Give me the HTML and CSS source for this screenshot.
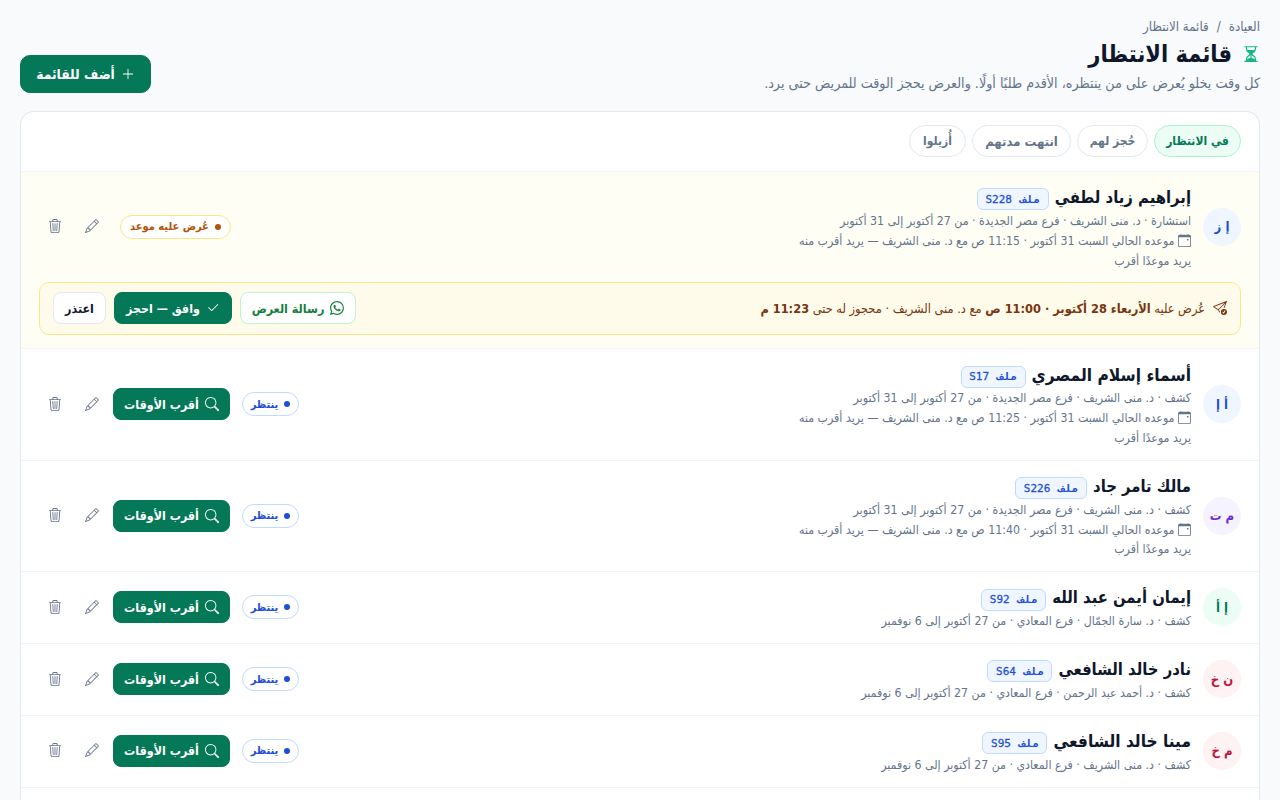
FILE: index.html
```html
<!doctype html>
<html lang="ar" dir="rtl">
<head>
    <meta charset="utf-8">
    <title>قائمة الانتظار</title>
    <link rel="stylesheet" href="styles.css">
</head>
<body>
<svg class="sprite" aria-hidden="true">
    <symbol id="i-hourglass" viewBox="0 0 16 16"><path d="M2.500 15a.5.5 0 1 1 0-1h1v-1a4.500 4.500 0 0 1 2.557-4.060c.290-.139.443-.377.443-.590v-.700c0-.213-.154-.451-.443-.590A4.500 4.500 0 0 1 3.500 3V2h-1a.5.5 0 0 1 0-1h11a.5.5 0 0 1 0 1h-1v1a4.500 4.500 0 0 1-2.557 4.060c-.290.139-.443.377-.443.590v.700c0 .213.154.451.443.590A4.500 4.500 0 0 1 12.500 13v1h1a.5.5 0 0 1 0 1zm2-13v1c0 .537.120 1.045.337 1.500h6.326c.216-.455.337-.963.337-1.500V2zm3 6.350c0 .701-.478 1.236-1.011 1.492A3.500 3.500 0 0 0 4.500 13s.866-1.299 3-1.480zm1 0v3.170c2.134.181 3 1.480 3 1.480a3.500 3.500 0 0 0-1.989-3.158C8.978 9.586 8.500 9.052 8.500 8.351z"/></symbol>
    <symbol id="i-plus" viewBox="0 0 16 16"><path d="M8 2a.5.5 0 0 1 .5.5v5h5a.5.5 0 0 1 0 1h-5v5a.5.5 0 0 1-1 0v-5h-5a.5.5 0 0 1 0-1h5v-5A.5.5 0 0 1 8 2"/></symbol>
    <symbol id="i-calendar" viewBox="0 0 16 16"><path d="M11 6.5a.5.5 0 0 1 .5-.5h1a.5.5 0 0 1 .5.5v1a.5.5 0 0 1-.5.5h-1a.5.5 0 0 1-.5-.5z"/><path d="M3.500 0a.5.5 0 0 1 .5.5V1h8V.5a.5.5 0 0 1 1 0V1h1a2 2 0 0 1 2 2v11a2 2 0 0 1-2 2H2a2 2 0 0 1-2-2V3a2 2 0 0 1 2-2h1V.5a.5.5 0 0 1 .5-.5M1 4v10a1 1 0 0 0 1 1h12a1 1 0 0 0 1-1V4z"/></symbol>
    <symbol id="i-send" viewBox="0 0 16 16"><path d="M15.964.686a.5.5 0 0 0-.65-.65L.767 5.855a.75.75 0 0 0-.124 1.329l4.995 3.178 1.531 2.406a.5.5 0 0 0 .844-.536L6.637 10.070l7.494-7.494-1.895 4.738a.5.5 0 1 0 .928.372zm-2.540 1.183L5.930 9.363 1.591 6.602z"/><path d="M16 12.500a3.500 3.500 0 1 1-7 0 3.500 3.500 0 0 1 7 0m-1.993-1.679a.5.5 0 0 0-.686.172l-1.170 1.950-.547-.547a.5.5 0 0 0-.708.708l.774.773a.75.75 0 0 0 1.174-.144l1.335-2.226a.5.5 0 0 0-.172-.686"/></symbol>
    <symbol id="i-whatsapp" viewBox="0 0 16 16"><path d="M13.601 2.326A7.850 7.850 0 0 0 7.994 0C3.627 0 .068 3.558.064 7.926c0 1.399.366 2.760 1.057 3.965L0 16l4.204-1.102a7.900 7.900 0 0 0 3.790.965h.004c4.368 0 7.926-3.558 7.930-7.930A7.900 7.900 0 0 0 13.600 2.326zM7.994 14.521a6.600 6.600 0 0 1-3.356-.920l-.240-.144-2.494.654.666-2.433-.156-.251a6.560 6.560 0 0 1-1.007-3.505c0-3.626 2.957-6.584 6.591-6.584a6.560 6.560 0 0 1 4.660 1.931 6.560 6.560 0 0 1 1.928 4.660c-.004 3.639-2.961 6.592-6.592 6.592m3.615-4.934c-.197-.099-1.170-.578-1.353-.646-.182-.065-.315-.099-.445.099-.133.197-.513.646-.627.775-.114.133-.232.148-.430.050-.197-.100-.836-.308-1.592-.985-.590-.525-.985-1.175-1.103-1.372-.114-.198-.011-.304.088-.403.087-.088.197-.232.296-.346.100-.114.133-.198.198-.330.065-.134.034-.248-.015-.347-.050-.099-.445-1.076-.612-1.470-.160-.389-.323-.335-.445-.340-.114-.007-.247-.007-.380-.007a.730.730 0 0 0-.529.247c-.182.198-.691.677-.691 1.654s.710 1.916.810 2.049c.098.133 1.394 2.132 3.383 2.992.470.205.840.326 1.129.418.475.152.904.129 1.246.080.380-.058 1.171-.480 1.338-.943.164-.464.164-.860.114-.943-.049-.084-.182-.133-.380-.232"/></symbol>
    <symbol id="i-check" viewBox="0 0 16 16"><path d="M13.854 3.646a.5.5 0 0 1 0 .708l-7 7a.5.5 0 0 1-.708 0l-3.500-3.500a.5.5 0 1 1 .708-.708L6.500 10.293l6.646-6.647a.5.5 0 0 1 .708 0"/></symbol>
    <symbol id="i-search" viewBox="0 0 16 16"><path d="M11.742 10.344a6.500 6.500 0 1 0-1.397 1.398h-.001q.044.060.098.115l3.850 3.850a1 1 0 0 0 1.415-1.414l-3.850-3.850a1 1 0 0 0-.115-.100zM12 6.500a5.500 5.500 0 1 1-11 0 5.500 5.500 0 0 1 11 0"/></symbol>
    <symbol id="i-pencil" viewBox="0 0 16 16"><path d="M12.146.146a.5.5 0 0 1 .708 0l3 3a.5.5 0 0 1 0 .708l-10 10a.5.5 0 0 1-.168.110l-5 2a.5.5 0 0 1-.650-.650l2-5a.5.5 0 0 1 .110-.168zM11.207 2.500 13.500 4.793 14.793 3.500 12.500 1.207zm1.586 3L10.500 3.207 4 9.707V10h.500a.5.5 0 0 1 .5.5v.5h.5a.5.5 0 0 1 .5.5v.5h.293zm-9.761 5.175-.106.106-1.528 3.821 3.821-1.528.106-.106A.5.5 0 0 1 5 12.500V12h-.5a.5.5 0 0 1-.5-.5V11h-.5a.5.5 0 0 1-.468-.325"/></symbol>
    <symbol id="i-trash" viewBox="0 0 16 16"><path d="M6.500 1h3a.5.5 0 0 1 .5.5v1H6v-1a.5.5 0 0 1 .5-.5M11 2.500v-1A1.500 1.500 0 0 0 9.500 0h-3A1.500 1.500 0 0 0 5 1.500v1H1.500a.5.5 0 0 0 0 1h.538l.853 10.660A2 2 0 0 0 4.885 16h6.230a2 2 0 0 0 1.994-1.840l.853-10.660h.538a.5.5 0 0 0 0-1zm1.958 1-.846 10.580a1 1 0 0 1-.997.920h-6.230a1 1 0 0 1-.997-.920L3.042 3.500zm-7.487 1a.5.5 0 0 1 .528.470l.5 8.500a.5.5 0 0 1-.998.060L5 5.030a.5.5 0 0 1 .470-.530zm5.058 0a.5.5 0 0 1 .470.530l-.5 8.500a.5.5 0 1 1-.998-.060l.5-8.500a.5.5 0 0 1 .528-.470M8 4.500a.5.5 0 0 1 .5.5v8.500a.5.5 0 0 1-1 0V5a.5.5 0 0 1 .5-.5"/></symbol>
</svg>

<nav class="crumbs"><span>العيادة</span><span>/</span><span>قائمة الانتظار</span></nav>
<header class="page-head">
    <div>
        <h1><svg class="icon"><use href="#i-hourglass"/></svg><span>قائمة الانتظار</span></h1>
        <p class="sub">كل وقت يخلو يُعرض على من ينتظره، الأقدم طلبًا أولًا. والعرض يحجز الوقت للمريض حتى يرد.</p>
    </div>
    <button class="btn primary add"><svg class="icon"><use href="#i-plus"/></svg><span>أضف للقائمة</span></button>
</header>

<main class="card">
    <div class="tabs">
        <a class="tab t1 active">في الانتظار</a>
        <a class="tab t2">حُجز لهم</a>
        <a class="tab t3">انتهت مدتهم</a>
        <a class="tab t4">أُزيلوا</a>
    </div>

    <section class="item offered">
        <div class="row">
            <div class="avatar blue">إ ز</div>
            <div class="info">
                <div class="name"><b>إبراهيم زياد لطفي</b><span class="file wide">ملف <i>S228</i></span></div>
                <div class="meta">استشارة · د. منى الشريف · فرع مصر الجديدة · من 27 أكتوبر إلى 31 أكتوبر</div>
                <div class="meta"><svg class="icon"><use href="#i-calendar"/></svg> موعده الحالي السبت 31 أكتوبر · 11:15 ص مع د. منى الشريف — يريد أقرب منه</div>
                <div class="meta">يريد موعدًا أقرب</div>
            </div>
            <span class="pill amber">عُرض عليه موعد</span>
            <div class="actions">
                <button class="tool"><svg class="icon"><use href="#i-pencil"/></svg></button>
                <button class="tool"><svg class="icon"><use href="#i-trash"/></svg></button>
            </div>
        </div>
        <div class="offer">
            <svg class="icon"><use href="#i-send"/></svg>
            <div class="offer-text">عُرض عليه <b>الأربعاء 28 أكتوبر · 11:00 ص</b> مع د. منى الشريف · محجوز له حتى <b>11:23 م</b></div>
            <button class="btn message"><svg class="icon"><use href="#i-whatsapp"/></svg><span>رسالة العرض</span></button>
            <button class="btn primary accept"><svg class="icon"><use href="#i-check"/></svg><span>وافق — احجز</span></button>
            <button class="btn decline"><span>اعتذر</span></button>
        </div>
    </section>

    <section class="item">
        <div class="row">
            <div class="avatar blue">أ إ</div>
            <div class="info">
                <div class="name large"><b>أسماء إسلام المصري</b><span class="file">ملف <i>S17</i></span></div>
                <div class="meta">كشف · د. منى الشريف · فرع مصر الجديدة · من 27 أكتوبر إلى 31 أكتوبر</div>
                <div class="meta"><svg class="icon"><use href="#i-calendar"/></svg> موعده الحالي السبت 31 أكتوبر · 11:25 ص مع د. منى الشريف — يريد أقرب منه</div>
                <div class="meta">يريد موعدًا أقرب</div>
            </div>
            <span class="pill">ينتظر</span>
            <div class="actions">
                <button class="btn primary find"><svg class="icon"><use href="#i-search"/></svg><span>أقرب الأوقات</span></button>
                <button class="tool"><svg class="icon"><use href="#i-pencil"/></svg></button>
                <button class="tool"><svg class="icon"><use href="#i-trash"/></svg></button>
            </div>
        </div>
    </section>

    <section class="item">
        <div class="row">
            <div class="avatar violet">م ت</div>
            <div class="info">
                <div class="name"><b>مالك تامر جاد</b><span class="file wide">ملف <i>S226</i></span></div>
                <div class="meta">كشف · د. منى الشريف · فرع مصر الجديدة · من 27 أكتوبر إلى 31 أكتوبر</div>
                <div class="meta"><svg class="icon"><use href="#i-calendar"/></svg> موعده الحالي السبت 31 أكتوبر · 11:40 ص مع د. منى الشريف — يريد أقرب منه</div>
                <div class="meta">يريد موعدًا أقرب</div>
            </div>
            <span class="pill">ينتظر</span>
            <div class="actions">
                <button class="btn primary find"><svg class="icon"><use href="#i-search"/></svg><span>أقرب الأوقات</span></button>
                <button class="tool"><svg class="icon"><use href="#i-pencil"/></svg></button>
                <button class="tool"><svg class="icon"><use href="#i-trash"/></svg></button>
            </div>
        </div>
    </section>

    <section class="item">
        <div class="row">
            <div class="avatar green">إ أ</div>
            <div class="info">
                <div class="name"><b>إيمان أيمن عبد الله</b><span class="file">ملف <i>S92</i></span></div>
                <div class="meta">كشف · د. سارة الجمّال · فرع المعادي · من 27 أكتوبر إلى 6 نوفمبر</div>
            </div>
            <span class="pill">ينتظر</span>
            <div class="actions">
                <button class="btn primary find"><svg class="icon"><use href="#i-search"/></svg><span>أقرب الأوقات</span></button>
                <button class="tool"><svg class="icon"><use href="#i-pencil"/></svg></button>
                <button class="tool"><svg class="icon"><use href="#i-trash"/></svg></button>
            </div>
        </div>
    </section>

    <section class="item">
        <div class="row">
            <div class="avatar red">ن خ</div>
            <div class="info">
                <div class="name"><b>نادر خالد الشافعي</b><span class="file">ملف <i>S64</i></span></div>
                <div class="meta">كشف · د. أحمد عبد الرحمن · فرع المعادي · من 27 أكتوبر إلى 6 نوفمبر</div>
            </div>
            <span class="pill">ينتظر</span>
            <div class="actions">
                <button class="btn primary find"><svg class="icon"><use href="#i-search"/></svg><span>أقرب الأوقات</span></button>
                <button class="tool"><svg class="icon"><use href="#i-pencil"/></svg></button>
                <button class="tool"><svg class="icon"><use href="#i-trash"/></svg></button>
            </div>
        </div>
    </section>

    <section class="item">
        <div class="row">
            <div class="avatar red">م خ</div>
            <div class="info">
                <div class="name large"><b>مينا خالد الشافعي</b><span class="file">ملف <i>S95</i></span></div>
                <div class="meta">كشف · د. منى الشريف · فرع المعادي · من 27 أكتوبر إلى 6 نوفمبر</div>
            </div>
            <span class="pill">ينتظر</span>
            <div class="actions">
                <button class="btn primary find"><svg class="icon"><use href="#i-search"/></svg><span>أقرب الأوقات</span></button>
                <button class="tool"><svg class="icon"><use href="#i-pencil"/></svg></button>
                <button class="tool"><svg class="icon"><use href="#i-trash"/></svg></button>
            </div>
        </div>
    </section>
</main>
</body>
</html>
```
FILE: styles.css
```css
* { box-sizing: border-box; }
html { height: 100%; overflow: hidden; }
body {
    margin: 0;
    height: 800px;
    overflow: hidden;
    padding: 17px 20px 0;
    display: flex;
    flex-direction: column;
    background: #f8fafc;
    color: #0f172a;
    font-family: "DejaVu Sans Condensed", "DejaVu Sans", sans-serif;
    font-stretch: condensed;
    font-size: 12px;
}
.sprite { display: none; }
.icon { width: 14px; height: 14px; fill: currentColor; flex: none; }
button { font: inherit; }

.crumbs {
    display: flex;
    gap: 8px;
    height: 20px;
    line-height: 20px;
    font-size: 13.200px;
    color: #64748b;
}
.page-head {
    display: flex;
    justify-content: space-between;
    height: 74px;
}
h1 {
    display: flex;
    align-items: center;
    gap: 10px;
    margin: 0;
    height: 34px;
    font-size: 23.4px;
    font-weight: 700;
}
h1 .icon { width: 18px; height: 18px; color: #10b981; }
.sub {
    margin: 0;
    height: 24px;
    line-height: 24px;
    font-size: 14.2px;
    color: #64748b;
    white-space: nowrap;
}

.btn {
    display: flex;
    align-items: center;
    justify-content: center;
    gap: 6px;
    height: 32px;
    padding: 0;
    border: 1px solid #e2e8f0;
    border-radius: 8px;
    background: #fff;
    color: #0f172a;
    font-size: 12.4px;
    font-weight: 700;
    white-space: nowrap;
}
.primary { background: #047857; border-color: #047857; color: #fff; }
.add { width: 131px; height: 38px; margin-top: 18px; border-radius: 10px; font-size: 13.7px; }
.find { width: 117px; }
.message { width: 116px; color: #15803d; border-color: #bbf7d0; }
.accept { width: 118px; }
.decline { width: 53px; }

.card {
    flex: 1;
    border: 1px solid #e2e8f0;
    border-bottom: 0;
    border-radius: 14px 14px 0 0;
    background: #fff;
    overflow: hidden;
}
.tabs {
    display: flex;
    gap: 6px;
    height: 60px;
    padding: 13px 18px 0;
    border-bottom: 1px solid #f1f5f9;
}
.tab {
    display: flex;
    align-items: center;
    justify-content: center;
    height: 32px;
    border: 1px solid #e2e8f0;
    border-radius: 16px;
    color: #64748b;
    font-size: 12px;
    font-weight: 700;
    white-space: nowrap;
}
.t1 { width: 87px; }
.t2 { width: 71px; }
.t3 { width: 99px; font-size: 13px; }
.t4 { width: 57px; }
.tab.active { background: #ecfdf5; border-color: #a7f3d0; color: #047857; }

.item { padding: 12.8px 18px 13.6px; border-bottom: 1px solid #f1f5f9; }
.offered { background: #fffef5; }
.row { display: flex; align-items: center; }
.avatar {
    display: flex;
    align-items: center;
    justify-content: center;
    width: 38px;
    height: 38px;
    margin-left: 12px;
    border-radius: 50%;
    font-size: 13px;
    font-weight: 700;
}
.blue { background: #eff6ff; color: #1d4ed8; }
.violet { background: #f5f3ff; color: #6d28d9; }
.green { background: #ecfdf5; color: #047857; }
.red { background: #fef2f2; color: #be123c; }
.info { flex: 1; margin-bottom: -2.5px; }
.name { display: flex; align-items: center; gap: 6px; height: 27.2px; white-space: nowrap; }
.name b { margin-top: -2px; font-size: 16.5px; }
.name.large b { font-size: 17.2px; }
.file {
    display: flex;
    align-items: center;
    justify-content: center;
    gap: 8px;
    width: 65px;
    height: 22px;
    margin-top: 2px;
    border: 1px solid #bfdbfe;
    border-radius: 6px;
    background: #eff6ff;
    color: #1d4ed8;
    font-family: "DejaVu Sans Mono", monospace;
    font-size: 11px;
    font-weight: 700;
}
.file.wide { width: 72px; }
.file i { font-style: normal; font-weight: 400; -webkit-text-stroke: .3px; }
.meta { height: 19.8px; line-height: 19.8px; font-size: 12.25px; color: #64748b; white-space: nowrap; }
.meta .icon { width: 13px; height: 13px; vertical-align: -2px; }

.pill {
    display: flex;
    align-items: center;
    justify-content: center;
    gap: 6px;
    width: 57px;
    height: 24px;
    margin-left: 12px;
    border: 1px solid #bfdbfe;
    border-radius: 12px;
    background: #fff;
    color: #1d4ed8;
    font-size: 11px;
    font-weight: 700;
    white-space: nowrap;
}
.pill::before { content: ""; width: 6px; height: 6px; border-radius: 50%; background: currentColor; }
.pill.amber { width: 111px; border-color: #fde68a; color: #b45309; }
.actions { display: flex; align-items: center; gap: 5px; }
.tool {
    display: flex;
    align-items: center;
    justify-content: center;
    width: 32px;
    height: 32px;
    padding: 0 0 1px;
    border: 0;
    background: none;
    color: #64748b;
}

.offer {
    display: flex;
    align-items: center;
    gap: 8px;
    height: 53px;
    margin-top: 12.8px;
    padding: 0 13px;
    border: 1px solid #fde68a;
    border-radius: 10px;
    background: #fffbeb;
    color: #78350f;
}
.offer-text { flex: 1; font-size: 12.7px; white-space: nowrap; }
```
